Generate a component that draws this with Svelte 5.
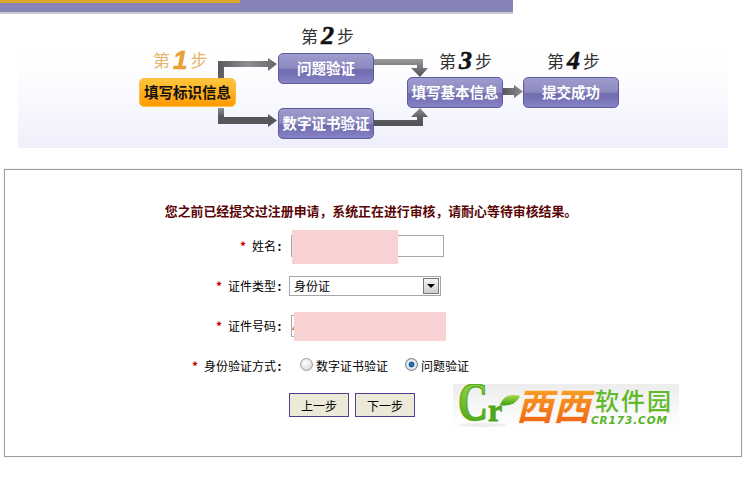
<script lang="ts">
    const nodes = [
        { label: "填写标识信息", cls: "node current", x: 139, y: 64, w: 97, h: 29 },
        { label: "问题验证", cls: "node", x: 278, y: 39, w: 96, h: 31 },
        { label: "数字证书验证", cls: "node", x: 278, y: 94, w: 96, h: 31 },
        { label: "填写基本信息", cls: "node", x: 407, y: 63, w: 96, h: 31 },
        { label: "提交成功", cls: "node", x: 523, y: 63, w: 96, h: 31 }
    ];

    const steps = [
        { n: 1, cls: "step first", x: 153, y: 33 },
        { n: 2, cls: "step", x: 301, y: 9 },
        { n: 3, cls: "step", x: 439, y: 34 },
        { n: 4, cls: "step", x: 547, y: 34 }
    ];

    let idType = $state("身份证");
    let verify = $state("question");
</script>

<div class="page">
    <div class="banner"><div class="banner-stripe"></div></div>

    <div class="flow">
        <div class="flow-bg"></div>

        <svg class="arrows" width="754" height="154" viewBox="0 0 754 154">
            <defs>
                <linearGradient id="arrowTop" x1="0" y1="0" x2="1" y2="0">
                    <stop offset="0" stop-color="#58585d" />
                    <stop offset="0.5" stop-color="#8f8f92" />
                    <stop offset="1" stop-color="#67676c" />
                </linearGradient>
                <linearGradient id="arrowDown" x1="0" y1="0" x2="0" y2="1">
                    <stop offset="0" stop-color="#9b9b9e" />
                    <stop offset="1" stop-color="#505055" />
                </linearGradient>
                <linearGradient id="arrowUp" x1="0" y1="0" x2="0" y2="1">
                    <stop offset="0" stop-color="#8e8e92" />
                    <stop offset="0.5" stop-color="#5f5f64" />
                    <stop offset="1" stop-color="#505055" />
                </linearGradient>
                <linearGradient id="arrowLow" x1="0" y1="0" x2="0" y2="1">
                    <stop offset="0" stop-color="#909094" />
                    <stop offset="0.45" stop-color="#56565b" />
                    <stop offset="1" stop-color="#56565b" />
                </linearGradient>
                <linearGradient id="arrowFade" x1="0" y1="0" x2="1" y2="0">
                    <stop offset="0" stop-color="#57575c" />
                    <stop offset="1" stop-color="#8d8d91" />
                </linearGradient>
            </defs>
            <path d="M218 64V47H268V44L277 50L268 57V53H224V64Z" fill="url(#arrowTop)" />
            <path d="M218 94H224V103H268V100L277 106.500L268 113V110H218Z" fill="url(#arrowLow)" />
            <path d="M374 45H423V54H428L420 63L411 54H417V51H374Z" fill="url(#arrowDown)" />
            <path d="M374 106H417V103H411L420 94L428 103H423V112H374Z" fill="url(#arrowUp)" />
            <path d="M503 74H514V71L523 77.500L514 84V81H503Z" fill="url(#arrowFade)" />
        </svg>

        {#each steps as s}
            <div class={s.cls} style="left: {s.x}px; top: {s.y}px;">
                第<b>{s.n}</b>步
            </div>
        {/each}

        {#each nodes as n}
            <div class={n.cls} style="left: {n.x}px; top: {n.y}px; width: {n.w}px; height: {n.h}px;">
                {n.label}
            </div>
        {/each}
    </div>

    <div class="panel">
        <p class="notice">您之前已经提交过注册申请&#65292;系统正在进行审核&#65292;请耐心等待审核结果。</p>

        <div class="row">
            <div class="label"><span class="req">*</span>姓名<span class="colon">:</span></div>
            <div class="field">
                <input class="text name" type="text" />
                <div class="mask mask-name"></div>
            </div>
        </div>

        <div class="row">
            <div class="label"><span class="req">*</span>证件类型<span class="colon">:</span></div>
            <div class="field">
                <select class="select" bind:value={idType}>
                    <option>身份证</option>
                    <option>护照</option>
                </select>
                <span class="select-btn"><i></i></span>
            </div>
        </div>

        <div class="row">
            <div class="label"><span class="req">*</span>证件号码<span class="colon">:</span></div>
            <div class="field">
                <input class="text code" type="text" value="4" />
                <div class="mask mask-code"></div>
            </div>
        </div>

        <div class="row">
            <div class="label"><span class="req">*</span>身份验证方式<span class="colon">:</span></div>
            <div class="radios">
                <label><input type="radio" bind:group={verify} value="cert" />数字证书验证</label>
                <label><input type="radio" bind:group={verify} value="question" />问题验证</label>
            </div>
        </div>

        <div class="actions">
            <button type="button">上一步</button>
            <button type="button">下一步</button>
            <svg class="logo" width="226" height="47" viewBox="0 0 226 47">
                <defs>
                    <linearGradient id="logoBg" x1="0" y1="0" x2="0" y2="1">
                        <stop offset="0" stop-color="#ededed" />
                        <stop offset="0.7" stop-color="#fbfbfb" />
                        <stop offset="1" stop-color="#ffffff" />
                    </linearGradient>
                    <linearGradient id="logoGreen" x1="0" y1="0" x2="0" y2="1">
                        <stop offset="0" stop-color="#a9dc4e" />
                        <stop offset="1" stop-color="#3f9e12" />
                    </linearGradient>
                    <linearGradient id="logoOrange" x1="0" y1="0" x2="0" y2="1">
                        <stop offset="0" stop-color="#f9b32a" />
                        <stop offset="1" stop-color="#ee5a12" />
                    </linearGradient>
                </defs>
                <rect width="226" height="47" fill="url(#logoBg)" />
                <ellipse cx="30" cy="41" rx="24" ry="2" fill="#eeeeee" />
                <text class="logo-c" x="5" y="36" textLength="30" lengthAdjust="spacingAndGlyphs" fill="url(#logoGreen)">C</text>
                <text class="logo-r" x="35" y="37" fill="#4ea81a">r</text>
                <path d="M47 21C50 12 58 9 67 12C64 19 56 23 47 21Z" fill="url(#logoGreen)" />
                <text class="logo-xi" x="63" y="36" fill="url(#logoOrange)">西西</text>
                <text class="logo-cn" x="142" y="26" fill="#63b82c">软件园</text>
                <text class="logo-en" x="138" y="40" fill="#57b224">CR173.COM</text>
            </svg>
        </div>
    </div>
</div>

<style>
    :global(body) {
        background: #fff;
    }

    .page {
        width: 754px;
        height: 482px;
        overflow: hidden;
        font-family: "Noto Sans CJK SC", "Liberation Sans", sans-serif;
        font-size: 12px;
        color: #000;
    }

    .banner {
        width: 513px;
        height: 12px;
        background: #8683b6;
        border-bottom: 2px solid #c9c9d4;
    }

    .banner-stripe {
        width: 240px;
        height: 3px;
        background: #dca52c;
    }

    .flow {
        position: relative;
        height: 134px;
    }

    .flow-bg {
        position: absolute;
        left: 18px;
        top: 32px;
        width: 710px;
        height: 102px;
        background: linear-gradient(#fff 0%, #fcfcff 35%, #efeffc 100%);
    }

    .arrows {
        position: absolute;
        left: 0;
        top: 0;
    }

    .step {
        position: absolute;
        font-size: 17px;
        line-height: 26px;
        color: #333;
        display: flex;
        align-items: center;
        white-space: nowrap;
    }

    .step b {
        font-family: "Liberation Serif", serif;
        font-style: italic;
        font-weight: 700;
        font-size: 26px;
        color: #111;
        margin: 0 3px;
        -webkit-text-stroke: 0.6px currentColor;
    }

    .step.first {
        color: #e9b56c;
    }

    .step.first b {
        font-family: "Liberation Sans", sans-serif;
        color: #e9a035;
    }

    .node {
        position: absolute;
        box-sizing: border-box;
        display: flex;
        align-items: center;
        justify-content: center;
        padding-bottom: 2px;
        border: 1px solid #5f5a9c;
        border-radius: 5px;
        background: linear-gradient(#9e9bcd 0%, #8d8ac0 48%, #6f6bae 55%, #8582c6 100%);
        color: #fff;
        font-size: 14.500px;
        font-weight: 700;
        white-space: nowrap;
    }

    .node.current {
        border-color: #f6c040;
        background: linear-gradient(#ffc53d, #ff9a02);
        color: #111;
    }

    .panel {
        box-sizing: border-box;
        margin-left: 4px;
        margin-top: 21px;
        width: 738px;
        height: 288px;
        border: 1px solid #9e9e9e;
        box-shadow: 0 0 1px #c8c8c8;
        padding-top: 31px;
    }

    .notice {
        margin: 0 0 5px;
        height: 20px;
        line-height: 20px;
        text-align: center;
        font-size: 12.900px;
        font-weight: 700;
        color: #5a0505;
        padding-right: 4px;
    }

    .row {
        display: flex;
        align-items: center;
        height: 40px;
        gap: 6px;
    }

    .label {
        width: 278px;
        margin-top: -2px;
        text-align: right;
        white-space: nowrap;
    }

    .req {
        color: #c00000;
        font-weight: 700;
        margin-right: 6px;
    }

    .colon {
        display: inline-block;
        width: 7px;
        text-align: center;
        font-weight: 700;
    }

    .field {
        position: relative;
    }

    .text {
        display: block;
        box-sizing: border-box;
        margin-left: 2px;
        width: 153px;
        height: 22px;
        border: 1px solid #a9a9a9;
        background: #fff;
        padding: 0;
        font: inherit;
        color: #a5661a;
    }

    .mask {
        position: absolute;
        background: #f8d1d2;
    }

    .mask-name {
        left: 3px;
        top: -5px;
        width: 106px;
        height: 34px;
    }

    .mask-code {
        left: 5px;
        top: -3px;
        width: 152px;
        height: 29px;
    }

    .select {
        display: block;
        box-sizing: border-box;
        appearance: none;
        width: 152px;
        height: 20px;
        border: 1px solid #a5a5b0;
        border-radius: 0;
        background: #fff;
        padding: 0 0 2px 4px;
        font: inherit;
        color: #000;
    }

    .select-btn {
        position: absolute;
        right: 2px;
        top: 2px;
        width: 16px;
        height: 16px;
        box-sizing: border-box;
        border: 1px solid #777;
        background: linear-gradient(#f4f4f4, #cfcfcf);
        display: flex;
        align-items: center;
        justify-content: center;
    }

    .select-btn i {
        width: 0;
        height: 0;
        border-left: 4px solid transparent;
        border-right: 4px solid transparent;
        border-top: 4px solid #000;
    }

    .radios {
        display: flex;
        gap: 17px;
        margin-left: 11px;
        margin-top: -2px;
    }

    .radios label {
        display: flex;
        align-items: center;
    }

    .radios input {
        appearance: none;
        width: 13px;
        height: 13px;
        margin: -2px 3px 0 0;
        border-radius: 50%;
        border: 1px solid #9a9a9a;
        background: radial-gradient(circle at 40% 35%, #fff, #cfcfcf);
    }

    .radios input:checked {
        background: radial-gradient(circle, #1f86d0 0, #14508f 32%, #e9eef2 42%, #c4c8cc 100%);
        border-color: #6a7a8a;
    }

    .actions {
        display: flex;
        align-items: flex-start;
        margin-top: -2px;
        padding-left: 284px;
        gap: 6px;
    }

    .actions button {
        margin-top: 9px;
        box-sizing: border-box;
        width: 60px;
        height: 24px;
        border: 1px solid #4b3f96;
        border-radius: 0;
        background: #ece9d8;
        color: #000;
        font: inherit;
        padding: 0;
    }

    .logo {
        margin-left: 32px;
    }

    .logo text {
        font-weight: 700;
    }

    .logo-c {
        font-family: "Liberation Serif", serif;
        font-size: 54px;
        stroke: #58ad1e;
        stroke-width: 1.5px;
    }

    .logo-r {
        font-family: "Liberation Serif", serif;
        font-size: 32px;
        stroke: #4ea81a;
        stroke-width: 0.8px;
    }

    .logo .logo-xi {
        font-style: italic;
        font-weight: 900;
        font-size: 37px;
        stroke: #fff;
        stroke-width: 0.5px;
    }

    .logo .logo-cn {
        font-size: 24px;
        font-weight: 500;
        letter-spacing: 2px;
    }

    .logo-en {
        font-family: "DejaVu Sans", sans-serif;
        font-style: italic;
        font-size: 10.500px;
        letter-spacing: 0.900px;
    }
</style>
